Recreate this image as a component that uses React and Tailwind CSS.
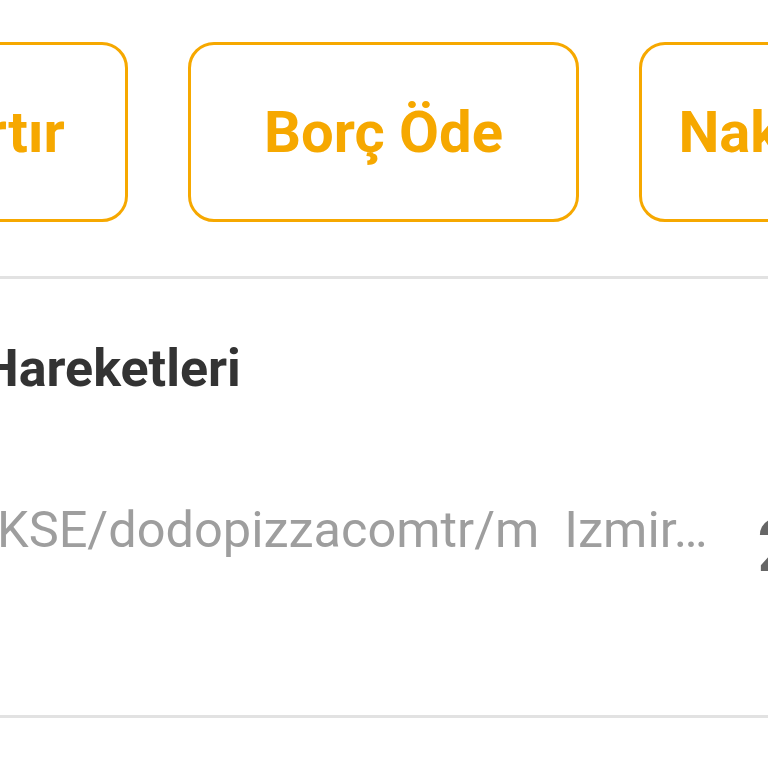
export default function App() {
  const actions = ["Limit Artır", "Borç Öde", "Nakit Avans"];

  return (
    <div className="w-[768px] h-[768px] overflow-hidden bg-white font-['Roboto',sans-serif]">
      <div className="flex gap-[60px] ml-[-263px] pt-[42px]">
        {actions.map((label) => (
          <button
            key={label}
            className="shrink-0 w-[391px] h-[180px] border-[3px] border-[#f6a800] rounded-[26px] flex items-center justify-center text-[58px] font-bold leading-none text-[#f6a800] whitespace-nowrap"
          >
            {label}
          </button>
        ))}
      </div>

      <div className="mt-[54px] h-[3px] bg-[#e2e2e2]" />

      <div className="h-[180px] flex items-center">
        <h2 className="ml-[-18px] text-[52px] font-bold leading-none text-[#333333] whitespace-nowrap">
          Hareketleri
        </h2>
      </div>

      <div className="h-[256px] flex items-start">
        <div className="pt-[46px] ml-[-3px] w-[715px] shrink-0 text-[50.5px] leading-none text-[#9e9e9e] whitespace-pre">
          {"KSE/dodopizzacomtr/m  Izmir…"}
        </div>
        <div className="mt-[52px] ml-[45px] shrink-0 text-[72px] font-medium leading-none text-[#666666] whitespace-nowrap">
          24,99 TL
        </div>
      </div>

      <div className="h-[3px] bg-[#e2e2e2]" />
    </div>
  );
}
